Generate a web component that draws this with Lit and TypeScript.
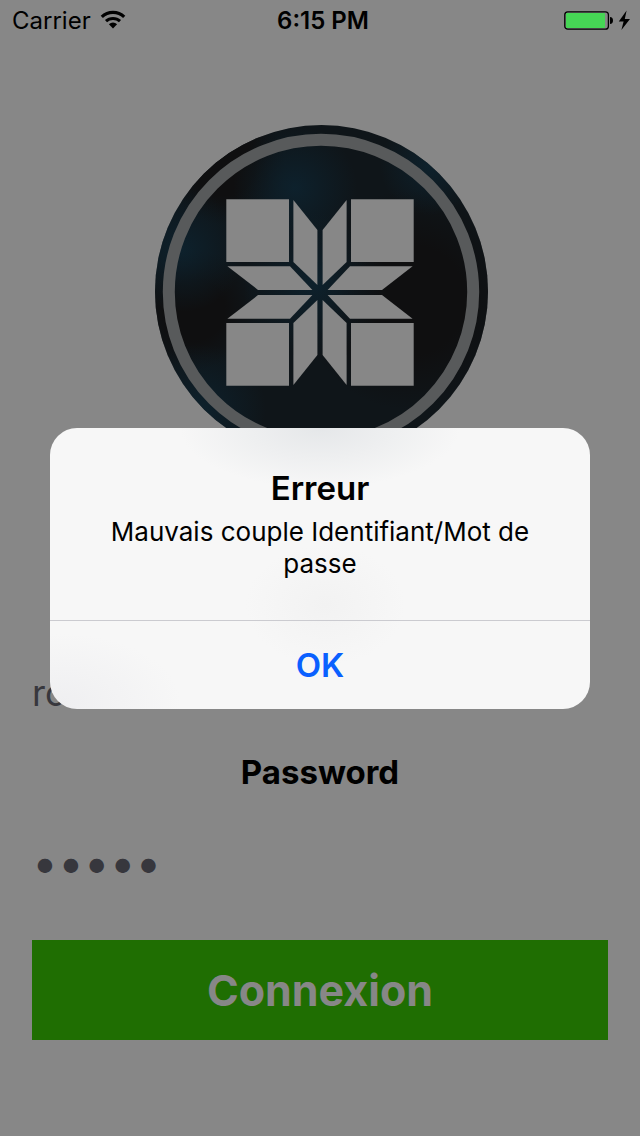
import { LitElement, html, css, svg } from "lit";
import { customElement, state } from "lit/decorators.js";

const QUARTERS = [
  "translate(320 292.5)",
  "translate(320 292.5) scale(-1 1)",
  "translate(320 292.5) scale(1 -1)",
  "translate(320 292.5) scale(-1 -1)",
];

@customElement("status-bar")
class StatusBar extends LitElement {
  static styles = css`
    :host {
      display: grid;
      grid-template-columns: 1fr auto 1fr;
      align-items: center;
      height: 40px;
      padding: 0 6px 0 12px;
      font-size: 24px;
      line-height: 42px;
      color: #000;
    }
    .carrier {
      display: flex;
      align-items: center;
      gap: 9px;
    }
    .time {
      font-weight: 600;
    }
    .battery {
      justify-self: end;
    }
    svg {
      display: block;
      overflow: visible;
    }
  `;

  render() {
    return html`
      <div class="carrier">
        <span>Carrier</span>
        <svg width="26" height="20" viewBox="0 1 26 20" aria-hidden="true">
          <path d="M1.8 6.9 A16.2 16.2 0 0 1 24.2 6.9" fill="none" stroke="#000" stroke-width="3.2" />
          <path d="M6 11.2 A10.2 10.2 0 0 1 20 11.2" fill="none" stroke="#000" stroke-width="3" />
          <path d="M8.9 14.2 A6 6 0 0 1 17.1 14.2 L13 18.6 Z" fill="#000" />
        </svg>
      </div>
      <div class="time">6:15 PM</div>
      <svg class="battery" width="70" height="24" viewBox="0 1 70 24" aria-hidden="true">
        <rect x="0.8" y="3.8" width="43.6" height="17.4" rx="3" fill="none" stroke="#000" stroke-width="1.3" />
        <rect x="2" y="5" width="39" height="15" rx="1" fill="#46d655" />
        <path d="M46 9 Q49 9.4 49 12.5 Q49 15.6 46 16 Z" fill="#000" />
        <path d="M62.6 2.5 L54.8 13.4 H59.6 L57.4 22 L66 11 H60.8 Z" fill="#000" />
      </svg>
    `;
  }
}

@customElement("brand-logo")
class BrandLogo extends LitElement {
  static styles = css`
    :host {
      display: block;
    }
    svg {
      display: block;
      width: 100%;
      overflow: visible;
    }
  `;

  render() {
    return html`
      <svg viewBox="153 125 334 334" aria-hidden="true">
        <defs>
          <radialGradient id="glow">
            <stop offset="0" stop-color="#0d2431" stop-opacity="0.8" />
            <stop offset="1" stop-color="#0d2431" stop-opacity="0" />
          </radialGradient>
          <radialGradient id="shade">
            <stop offset="0" stop-color="#0f0f10" />
            <stop offset="0.5" stop-color="#0f0f10" />
            <stop offset="1" stop-color="#0f0f10" stop-opacity="0" />
          </radialGradient>
          <clipPath id="disc"><circle cx="321.5" cy="291.5" r="166.5" /></clipPath>
        </defs>
        <g clip-path="url(#disc)">
          <rect x="154" y="125" width="334" height="334" fill="#0f1519" />
          <circle cx="410" cy="300" r="110" fill="url(#shade)" />
          <circle cx="195" cy="310" r="60" fill="url(#shade)" />
          <circle cx="225" cy="165" r="60" fill="url(#shade)" />
          <circle cx="182" cy="250" r="62" fill="url(#glow)" />
          <circle cx="295" cy="188" r="62" fill="url(#glow)" />
          <circle cx="315" cy="285" r="72" fill="url(#glow)" />
          <circle cx="430" cy="165" r="50" fill="url(#glow)" />
          <circle cx="200" cy="410" r="66" fill="url(#glow)" />
        </g>
        <circle cx="321" cy="292" r="152.2" fill="none" stroke="#585a5b" stroke-width="12" />
        ${QUARTERS.map(
          (t) => svg`
            <g transform=${t} fill="#878787">
              <path d="M-93.7 -93.2 H-31 V-30.5 H-93.7 Z" />
              <path d="M-26.6 -92.5 V-30.5 L-2.6 -7.5 V-62.5 Z" />
              <path d="M-92.6 -26.3 H-30 L-7.6 -2.6 H-62 Z" />
            </g>
          `
        )}
      </svg>
    `;
  }
}

@customElement("app-root")
class AppRoot extends LitElement {
  @state() private alertOpen = true;

  static styles = css`
    :host {
      display: block;
      position: relative;
      min-height: 100vh;
      background: #878787;
      font-family: Inter, "Liberation Sans", sans-serif;
      color: #000;
    }
    .logo {
      width: 52.2%;
      max-width: 334px;
      margin: 85px auto 0;
    }
    .form {
      display: flex;
      flex-direction: column;
      padding: 204px 32px 96px;
    }
    .field {
      box-sizing: border-box;
      width: 100%;
      height: 60px;
      padding: 0;
      border: 0;
      outline: 0;
      background: none;
      font: 400 36px/60px Inter, "Liberation Sans", sans-serif;
      color: #37373d;
    }
    .secret {
      font-size: 46px;
    }
    .label {
      margin: 29px 0 40px;
      font-size: 33px;
      line-height: 40px;
      font-weight: 700;
      text-align: center;
    }
    .submit {
      height: 100px;
      margin-top: 48px;
      padding: 0;
      border: 0;
      background: #1f6e02;
      font: 700 43px/100px Inter, "Liberation Sans", sans-serif;
      color: #878787;
    }
    .overlay {
      position: absolute;
      inset: 0;
      display: grid;
      place-items: center;
    }
    .alert {
      width: 540px;
      max-width: 90%;
      border-radius: 27px;
      overflow: hidden;
      text-align: center;
      background:
        radial-gradient(ellipse 140px 60px at 50% 0, #e5e7e9, #e5e7e900),
        radial-gradient(ellipse 80px 60px at 51% 63%, #f2f2f2, #f2f2f200),
        radial-gradient(ellipse 120px 70px at 2% 98%, #efeff1, #efeff100),
        #f7f7f7;
    }
    .message {
      padding: 40px 32px 40px;
    }
    .title {
      margin: 0;
      font-size: 33px;
      line-height: 40px;
      font-weight: 600;
    }
    .text {
      margin: 8px 0 0;
      font-size: 26px;
      line-height: 32px;
    }
    .ok {
      display: block;
      width: 100%;
      height: 89px;
      padding: 0;
      border: 0;
      border-top: 1px solid #cbcbd0;
      background: none;
      font: 600 33px/88px Inter, "Liberation Sans", sans-serif;
      color: #0a60ff;
    }
  `;

  private close() {
    this.alertOpen = false;
  }

  render() {
    return html`
      <status-bar></status-bar>
      <brand-logo class="logo"></brand-logo>
      <form class="form" @submit=${(e: Event) => e.preventDefault()}>
        <input class="field" type="text" aria-label="Identifiant" .value=${"ro"} />
        <label class="label" for="password">Password</label>
        <input class="field secret" id="password" type="password" .value=${"•••••"} />
        <button class="submit" type="submit">Connexion</button>
      </form>
      ${this.alertOpen
        ? html`
            <div class="overlay">
              <section class="alert" role="alertdialog" aria-labelledby="title" aria-describedby="text">
                <div class="message">
                  <h2 class="title" id="title">Erreur</h2>
                  <p class="text" id="text">Mauvais couple Identifiant/Mot de passe</p>
                </div>
                <button class="ok" type="button" @click=${this.close}>OK</button>
              </section>
            </div>
          `
        : null}
    `;
  }
}
